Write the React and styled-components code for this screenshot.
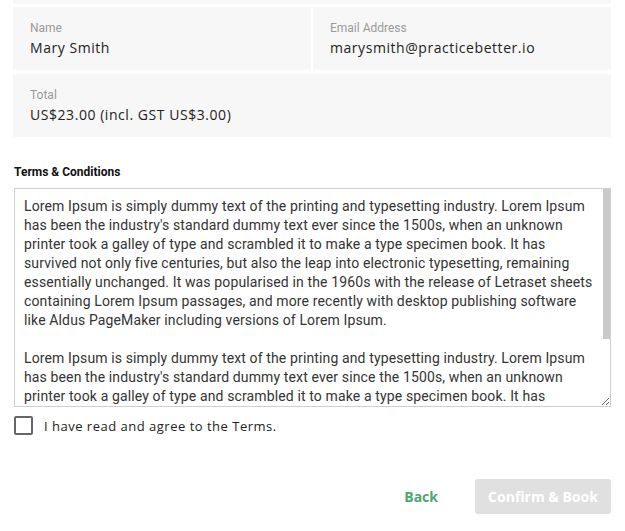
import React from "react";
import styled, { createGlobalStyle } from "styled-components";

const Global = createGlobalStyle`
  html, body { margin: 0; padding: 0; background: #fff; }
  body { font-family: Roboto, "Liberation Sans", sans-serif; }
`;

const Page = styled.div`
  padding: 0 14px 0 13px;
  display: flex;
  flex-direction: column;
`;

const TopStrip = styled.div`
  height: 4px;
  background: #f7f7f7;
  margin-bottom: 3px;
`;

const Grid = styled.div`
  display: grid;
  grid-template-columns: 1fr 1fr;
  gap: 4px 2px;
`;

const Card = styled.div`
  background: #f7f7f7;
  height: 63px;
  padding: 14px 16px 0 17px;
  box-sizing: border-box;
  grid-column: ${(p) => (p.$wide ? "1 / span 2" : "auto")};
`;

const Label = styled.div`
  font-family: Roboto, sans-serif;
  font-size: 12px;
  color: #9a9a9a;
  line-height: 14px;
`;

const Value = styled.div`
  font-family: "Open Sans", sans-serif;
  font-size: 14px;
  font-weight: 500;
  letter-spacing: 0.55px;
  color: #222;
  margin-top: 4px;
  line-height: 18px;
`;

const Section = styled.div`
  margin-top: 28px;
  padding-left: 1px;
`;

const SectionTitle = styled.div`
  font-family: Roboto, sans-serif;
  font-weight: 700;
  font-size: 12px;
  color: #111;
  line-height: 14px;
`;

const TermsWrap = styled.div`
  position: relative;
  margin-top: 9px;
`;

const TermsBox = styled.textarea`
  display: block;
  width: 100%;
  height: 219px;
  box-sizing: border-box;
  border: 1px solid #cfcfcf;
  padding: 8px 17px 9px 9px;
  font-family: Roboto, sans-serif;
  font-size: 14px;
  letter-spacing: 0.13px;
  line-height: 19px;
  color: #333;
  outline: none;
  overflow: hidden;
`;

const Thumb = styled.div`
  position: absolute;
  top: 1px;
  right: 1px;
  width: 7px;
  height: 150px;
  background: #c9c9c9;
  pointer-events: none;
`;

const CheckRow = styled.label`
  display: flex;
  align-items: center;
  gap: 11px;
  margin-top: 9px;
`;

const Box = styled.span`
  width: 19px;
  height: 19px;
  border: 2px solid #666;
  border-radius: 2px;
  box-sizing: border-box;
`;

const CheckText = styled.span`
  font-family: "Open Sans", sans-serif;
  font-size: 13px;
  letter-spacing: 0.5px;
  color: #222;
`;

const Actions = styled.div`
  display: flex;
  justify-content: flex-end;
  align-items: center;
  gap: 37px;
  margin-top: 44px;
`;

const BackBtn = styled.button`
  border: 0;
  background: none;
  padding: 0;
  font-family: "Open Sans", sans-serif;
  font-weight: 700;
  font-size: 14px;
  color: #4ea66f;
`;

const ConfirmBtn = styled.button`
  border: 0;
  background: #e0e0e0;
  border-radius: 3px;
  width: 136px;
  height: 35px;
  font-family: "Open Sans", sans-serif;
  font-weight: 700;
  font-size: 14px;
  color: #fff;
`;

const para =
  "Lorem Ipsum is simply dummy text of the printing and typesetting industry. Lorem Ipsum has been the industry's standard dummy text ever since the 1500s, when an unknown printer took a galley of type and scrambled it to make a type specimen book. It has survived not only five centuries, but also the leap into electronic typesetting, remaining essentially unchanged. It was popularised in the 1960s with the release of Letraset sheets containing Lorem Ipsum passages, and more recently with desktop publishing software like Aldus PageMaker including versions of Lorem Ipsum.";

export default function App() {
  return (
    <Page>
      <Global />
      <TopStrip />
      <Grid>
        <Card>
          <Label>Name</Label>
          <Value>Mary Smith</Value>
        </Card>
        <Card>
          <Label>Email Address</Label>
          <Value>marysmith@practicebetter.io</Value>
        </Card>
        <Card $wide>
          <Label>Total</Label>
          <Value>US$23.00 (incl. GST US$3.00)</Value>
        </Card>
      </Grid>
      <Section>
        <SectionTitle>Terms &amp; Conditions</SectionTitle>
        <TermsWrap>
          <TermsBox readOnly defaultValue={para + "\n\n" + para} />
          <Thumb />
        </TermsWrap>
        <CheckRow>
          <Box />
          <CheckText>I have read and agree to the Terms.</CheckText>
        </CheckRow>
      </Section>
      <Actions>
        <BackBtn>Back</BackBtn>
        <ConfirmBtn>Confirm &amp; Book</ConfirmBtn>
      </Actions>
    </Page>
  );
}
